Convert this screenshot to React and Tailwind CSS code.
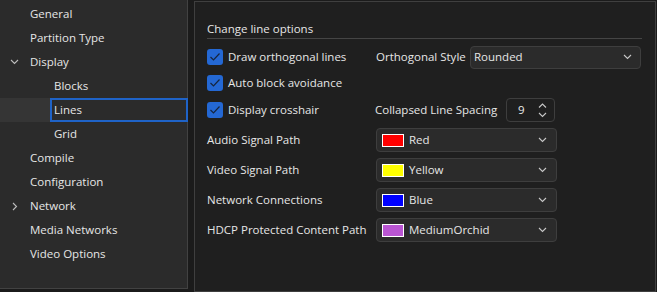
import { useState } from "react";

const font = { fontFamily: '"Open Sans", "Noto Sans", sans-serif' };

function Chevron({ dir = "down", className = "" }) {
  const d = {
    down: "M1 1 L4.5 4.5 L8 1",
    right: "M1 1 L4.5 4.5 L1 8",
    up: "M1 4.5 L4.5 1 L8 4.5",
  }[dir];
  const size = dir === "right" ? [6, 9] : [9, 6];
  return (
    <svg width={size[0]} height={size[1]} viewBox={`0 0 ${size[0]} ${size[1]}`} className={className}>
      <path d={d} fill="none" stroke="currentColor" strokeWidth="1.1" />
    </svg>
  );
}

function Check({ label }) {
  return (
    <div className="flex items-center gap-[5px]">
      <div className="w-[16px] h-[16px] rounded-[3px] bg-[#2468d4] flex items-center justify-center">
        <svg width="12" height="10" viewBox="0 0 12 10">
          <path d="M1.5 5 L4.5 8 L10.5 1.5" fill="none" stroke="#16253d" strokeWidth="1.2" />
        </svg>
      </div>
      <span>{label}</span>
    </div>
  );
}

function ColorSelect({ color, name }) {
  return (
    <div className="w-[181px] h-[24px] rounded-[4px] border border-[#3e3e3e] bg-[#2b2b2b] flex items-center pl-[5px] pr-[9px]">
      <div className="w-[22px] h-[13px] border border-white" style={{ background: color }} />
      <span className="ml-[5px] flex-1">{name}</span>
      <Chevron className="text-[#c8c8c8]" />
    </div>
  );
}

const navItems = [
  { label: "General" },
  { label: "Partition Type" },
  { label: "Display", chevron: "down" },
  { label: "Blocks", child: true },
  { label: "Lines", child: true },
  { label: "Grid", child: true },
  { label: "Compile" },
  { label: "Configuration" },
  { label: "Network", chevron: "right" },
  { label: "Media Networks" },
  { label: "Video Options" },
];

export default function App() {
  const [selected] = useState("Lines");

  const colorRows = [
    ["Audio Signal Path", "#ff0000", "Red"],
    ["Video Signal Path", "#ffff00", "Yellow"],
    ["Network Connections", "#0000ff", "Blue"],
    ["HDCP Protected Content Path", "#ba55d3", "MediumOrchid"],
  ];

  return (
    <div className="w-[657px] h-[292px] flex bg-[#1b1b1b] text-[11.5px] text-[#e6e6e6] whitespace-nowrap overflow-hidden" style={font}>
      {/* SIDEBAR */}
      <div className="w-[188px] h-[289px] bg-[#2b2b2b] border-r border-b border-[#424242] pt-[2px]">
        {navItems.map((item) => (
          <div
            key={item.label}
            className={`h-[24px] flex items-center ${item.label === selected ? "bg-[#353535]" : ""}`}
          >
            <div className="w-[30px] flex justify-center pr-[1px] text-[#bdbdbd]">
              {item.chevron === "down" && <Chevron dir="down" />}
              {item.chevron === "right" && <Chevron dir="right" />}
            </div>
            {item.child && <div className="w-[20px]" />}
            {item.label === selected ? (
              <div className="flex-1 h-[24px] border-2 border-[#1f63c7] bg-[#2b2b2b] flex items-center pl-[2px] -mr-[1px]">
                {item.label}
              </div>
            ) : (
              <span className={item.child ? "pl-[4px]" : ""}>{item.label}</span>
            )}
          </div>
        ))}
      </div>

      {/* RIGHT CONTENT */}
      <div className="ml-[6px] mt-[1px] w-[462px] h-[291px] border border-[#3f3f3f] bg-[#1f1f1f] pl-[12px]">
        <div className="mt-[18px] w-[435px] h-[19px] border-b border-[#454545] leading-[18px]">
          Change line options
        </div>

        <div className="mt-[6px] h-[24px] flex items-center">
          <div className="w-[169px]">
            <Check label="Draw orthogonal lines" />
          </div>
          <span className="w-[94px]">Orthogonal Style</span>
          <div className="w-[171px] h-[23px] rounded-[4px] border border-[#3e3e3e] bg-[#2b2b2b] flex items-center pl-[3px] pr-[8px]">
            <span className="flex-1">Rounded</span>
            <Chevron className="text-[#c8c8c8]" />
          </div>
        </div>

        <div className="mt-[2px] h-[24px] flex items-center">
          <Check label="Auto block avoidance" />
        </div>

        <div className="mt-[3px] h-[24px] flex items-center">
          <div className="w-[168px]">
            <Check label="Display crosshair" />
          </div>
          <span className="w-[131px]">Collapsed Line Spacing</span>
          <div className="w-[49px] h-[24px] rounded-[4px] border border-[#3e3e3e] bg-[#1f1f1f] flex items-center pl-[11px] pr-[7px]">
            <span className="flex-1">9</span>
            <div className="flex flex-col gap-[3px] text-[#c8c8c8]">
              <Chevron dir="up" />
              <Chevron dir="down" />
            </div>
          </div>
        </div>

        <div className="mt-[6px] flex flex-col gap-[6px]">
          {colorRows.map(([label, color, name]) => (
            <div key={label} className="h-[24px] flex items-center">
              <span className="w-[169px]">{label}</span>
              <ColorSelect color={color} name={name} />
            </div>
          ))}
        </div>
      </div>
    </div>
  );
}
